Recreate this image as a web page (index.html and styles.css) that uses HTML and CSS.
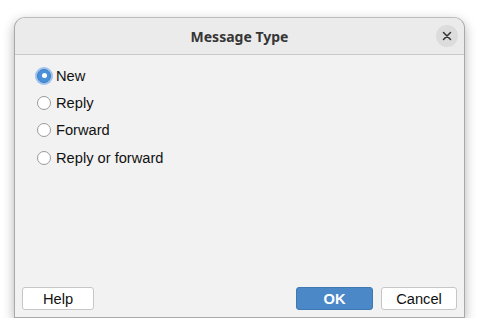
FILE: index.html
```html
<!DOCTYPE html>
<html>
<head>
<meta charset="utf-8">
<link rel="stylesheet" href="styles.css">
</head>
<body>
<div class="window">
  <div class="titlebar">
    <span class="title">Message Type</span>
    <button class="close" aria-label="Close">
      <svg width="10" height="10" viewBox="0 0 10 10"><path d="M1.5 1.5 L8.5 8.5 M8.5 1.5 L1.5 8.5" stroke="#333" stroke-width="1.5" stroke-linecap="round"/></svg>
    </button>
  </div>
  <div class="content">
    <label class="option"><span class="radio checked"></span>New</label>
    <label class="option"><span class="radio"></span>Reply</label>
    <label class="option"><span class="radio"></span>Forward</label>
    <label class="option"><span class="radio"></span>Reply or forward</label>
  </div>
  <div class="footer">
    <button class="btn">Help</button>
    <div class="spacer"></div>
    <button class="btn primary">OK</button>
    <button class="btn">Cancel</button>
  </div>
</div>
</body>
</html>
```

FILE: styles.css
```css
html, body {
  margin: 0;
  padding: 0;
  background: #ffffff;
}
body {
  padding: 17px 0 0 14px;
  font-family: "Liberation Sans", Arial, sans-serif;
}
.window {
  width: 451px;
  height: 301px;
  box-sizing: border-box;
  background: #f2f2f2;
  border: 1px solid #a9a9a9;
  border-top-color: #bdbdbd;
  border-radius: 11px 11px 0 0;
  box-shadow: 0 4px 12px rgba(0,0,0,0.3);
  display: flex;
  flex-direction: column;
  overflow: hidden;
}
.titlebar {
  height: 36px;
  flex: none;
  background: #ebebeb;
  border-bottom: 1px solid #c9c9c9;
  display: flex;
  align-items: center;
  justify-content: center;
  position: relative;
}
.title {
  font-family: "Noto Sans", "Open Sans", sans-serif;
  font-weight: bold;
  font-size: 14px;
  color: #363636;
  padding-top: 1px;
}
.close {
  position: absolute;
  right: 6px;
  top: 7px;
  width: 22px;
  height: 22px;
  border-radius: 50%;
  border: none;
  background: #dcdcdc;
  padding: 0;
  display: flex;
  align-items: center;
  justify-content: center;
}
.content {
  flex: 1;
  padding: 7px 0 0 22px;
  display: flex;
  flex-direction: column;
}
.option {
  height: 27.3px;
  display: flex;
  align-items: center;
  font-size: 14.67px;
  color: #111;
}
.radio {
  width: 14px;
  height: 14px;
  box-sizing: border-box;
  border: 1px solid #9a9a9a;
  border-radius: 50%;
  background: #fff;
  margin-right: 5px;
  flex: none;
}
.radio.checked {
  background: #4a90d9;
  border: 1px solid #3f7fc3;
  box-shadow: 0 0 0 2px #9cc3ee;
  position: relative;
}
.radio.checked::after {
  content: "";
  position: absolute;
  left: 3.5px;
  top: 3.5px;
  width: 5px;
  height: 5px;
  border-radius: 50%;
  background: #fff;
}
.footer {
  flex: none;
  display: flex;
  align-items: center;
  padding: 0 7px 7px 7px;
  gap: 8px;
}
.spacer {
  flex: 1;
}
.btn {
  height: 23px;
  box-sizing: border-box;
  border: 1px solid #c6c6c6;
  border-radius: 3px;
  background: #ffffff;
  font-family: "Liberation Sans", Arial, sans-serif;
  font-size: 14.67px;
  color: #111;
  padding: 0;
  width: 72px;
}
.btn:last-child {
  width: 76px;
}
.btn.primary {
  width: 77px;
  background: #4a88c8;
  border-color: #3f78b2;
  color: #fff;
  font-weight: bold;
}
```
